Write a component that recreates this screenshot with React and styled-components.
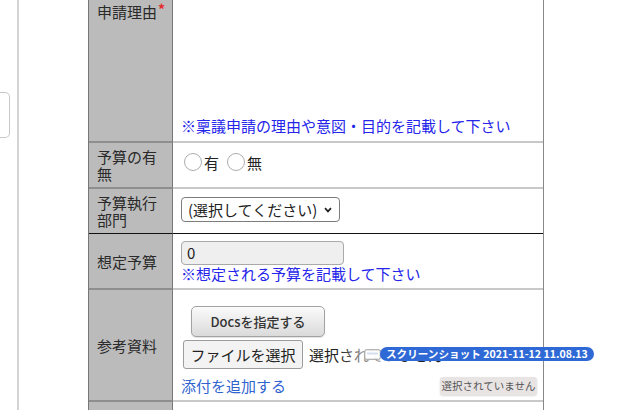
import React from 'react';
import styled, { createGlobalStyle } from 'styled-components';

const GlobalStyle = createGlobalStyle`
  html, body {
    margin: 0;
    padding: 0;
    background: #fff;
    overflow: hidden;
  }
  body {
    font-family: "Noto Sans CJK JP", "Noto Sans", sans-serif;
    color: #222;
  }
  * { box-sizing: border-box; }
`;

const Page = styled.div`
  position: relative;
  display: flex;
  width: 639px;
  height: 410px;
  overflow: hidden;
`;

const Sidebar = styled.aside`
  width: 19px;
  flex-shrink: 0;
  border-right: 2px solid #d4d4d4;
  padding-top: 92px;
`;

const SideTab = styled.div`
  width: 10px;
  height: 46px;
  border: 1px solid #c8c8c8;
  border-left: none;
  border-radius: 0 5px 5px 0;
`;

const Main = styled.main`
  padding-left: 69px;
`;

const Form = styled.div`
  width: 456px;
  border-left: 1px solid #777;
  border-right: 1px solid #888;
`;

const lines = {
  gray: { label: '2px solid #8e8e8e', value: '2px solid #c8c8c8' },
  black: { label: '1px solid #111', value: '1px solid #111' },
  none: { label: 'none', value: 'none' },
};

const Row = styled.div`
  display: grid;
  grid-template-columns: 84px 1fr;
  height: ${p => p.$height}px;
`;

const Label = styled.div`
  display: flex;
  align-items: ${p => (p.$top ? 'flex-start' : 'center')};
  padding: ${p => (p.$top ? '3px' : '0')} 8px 0 8px;
  background: #bbbbbb;
  border-right: 1px solid #777;
  border-bottom: ${p => lines[p.$line].label};
  font-size: 15px;
  line-height: 17px;
  color: #2a2a2a;
`;

const Required = styled.span`
  color: #e52a2a;
  font-size: 14px;
  font-weight: 700;
  line-height: 12px;
  align-self: flex-start;
  margin: 0 -10px 0 1px;
`;

const Value = styled.div`
  display: flex;
  flex-direction: ${p => (p.$column ? 'column' : 'row')};
  justify-content: ${p => p.$justify || 'flex-start'};
  align-items: ${p => (p.$column ? 'flex-start' : 'center')};
  padding: ${p => p.$pad || '0 8px'};
  border-bottom: ${p => lines[p.$line].value};
  font-size: 15px;
  line-height: 17px;
`;

const Hint = styled.div`
  color: #2424ea;
  font-size: 15px;
  line-height: 17px;
`;

const RadioGroup = styled.label`
  display: flex;
  align-items: center;
  margin-right: 5px;
  margin-top: -6px;
  font-size: 15px;
`;

const Radio = styled.input.attrs({ type: 'radio' })`
  appearance: none;
  width: 18px;
  height: 18px;
  margin: 0 2px 0 3px;
  border: 1.5px solid #adadad;
  border-radius: 50%;
  background: #fff;
`;

const SelectWrap = styled.div`
  position: relative;
  margin-top: -4px;
`;

const Select = styled.select`
  appearance: none;
  width: 159px;
  height: 25px;
  padding: 0 20px 0 6px;
  border: 1px solid #7c7c7c;
  border-radius: 4px;
  background: #fff;
  font-family: inherit;
  font-size: 15px;
  color: #222;
`;

const Chevron = styled.svg`
  position: absolute;
  right: 8px;
  top: 10px;
  pointer-events: none;
`;

const NumberInput = styled.input`
  width: 163px;
  height: 24px;
  padding: 0 5px;
  border: 1px solid #a9a9a9;
  border-radius: 4px;
  background: #efefef;
  font-family: inherit;
  font-size: 15px;
  color: #222;
`;

const DocsButton = styled.button`
  margin-left: 10px;
  width: 134px;
  height: 31px;
  border: 1px solid #a2a2a2;
  border-radius: 5px;
  background: linear-gradient(#fbfbfb, #dadada);
  box-shadow: 0 1px 1px rgba(0, 0, 0, 0.12);
  font-family: inherit;
  font-size: 13px;
  font-weight: 500;
  color: #333;
`;

const FileLine = styled.div`
  display: flex;
  align-items: center;
  gap: 6px;
  margin-top: 3px;
`;

const FileButton = styled.button`
  margin-left: 2px;
  height: 29px;
  width: 120px;
  padding: 0;
  border: 1px solid #9c9c9c;
  border-radius: 3px;
  background: #f3f3f3;
  font-family: inherit;
  font-size: 15px;
  color: #222;
`;

const FileStatus = styled.span`
  font-size: 15px;
  color: #222;
`;

const AddLink = styled.a`
  margin-top: 8px;
  color: #2f63cf;
  font-size: 15px;
  text-decoration: none;
`;

const DragGlow = styled.div`
  position: absolute;
  left: 340px;
  top: 328px;
  width: 70px;
  height: 50px;
  background: radial-gradient(closest-side, rgba(255, 255, 255, 0.85), rgba(255, 255, 255, 0));
`;

const DragIcon = styled.svg`
  position: absolute;
  left: 364px;
  top: 349px;
`;

const DragPill = styled.div`
  position: absolute;
  left: 380px;
  top: 347px;
  height: 14px;
  padding: 0 6px;
  border-radius: 7px;
  background: #2f69d6;
  color: #fff;
  font-size: 10.6px;
  font-weight: 600;
  line-height: 14px;
  white-space: nowrap;
`;

const Tooltip = styled.div`
  position: absolute;
  left: 440px;
  top: 377px;
  width: 97px;
  height: 18px;
  border-radius: 3px;
  background: #e8e4e4;
  box-shadow: 0 1px 2px rgba(0, 0, 0, 0.15);
  color: #555;
  font-size: 10.5px;
  line-height: 18px;
  text-align: center;
`;

export default function App() {
  return (
    <>
      <GlobalStyle />
      <Page>
        <Sidebar>
          <SideTab />
        </Sidebar>
        <Main>
          <Form>
            <Row $height={143}>
              <Label $top $line="gray">
                申請理由<Required>*</Required>
              </Label>
              <Value $column $justify="flex-end" $pad="0 8px 7px" $line="gray">
                <Hint>※稟議申請の理由や意図・目的を記載して下さい</Hint>
              </Value>
            </Row>
            <Row $height={46}>
              <Label $line="gray">予算の有無</Label>
              <Value $line="gray">
                <RadioGroup>
                  <Radio name="budget" />有
                </RadioGroup>
                <RadioGroup>
                  <Radio name="budget" />無
                </RadioGroup>
              </Value>
            </Row>
            <Row $height={45}>
              <Label $line="black">予算執行部門</Label>
              <Value $line="black">
                <SelectWrap>
                  <Select defaultValue="">
                    <option value="">(選択してください)</option>
                  </Select>
                  <Chevron width="8" height="6" viewBox="0 0 8 6">
                    <path d="M1 1.2 L4 4.4 L7 1.2" fill="none" stroke="#222" strokeWidth="1.7" />
                  </Chevron>
                </SelectWrap>
              </Value>
            </Row>
            <Row $height={56}>
              <Label $line="gray">想定予算</Label>
              <Value $column $justify="center" $line="gray">
                <NumberInput defaultValue="0" />
                <Hint>※想定される予算を記載して下さい</Hint>
              </Value>
            </Row>
            <Row $height={112}>
              <Label $line="gray">参考資料</Label>
              <Value $column $pad="16px 8px 0" $line="gray">
                <DocsButton>Docsを指定する</DocsButton>
                <FileLine>
                  <FileButton>ファイルを選択</FileButton>
                  <FileStatus>選択されていません</FileStatus>
                </FileLine>
                <AddLink href="#">添付を追加する</AddLink>
              </Value>
            </Row>
            <Row $height={40}>
              <Label $line="none" />
              <Value $line="none" />
            </Row>
          </Form>
        </Main>
        <DragGlow />
        <DragIcon width="17" height="11" viewBox="0 0 17 11">
          <rect x="0.75" y="0.75" width="15.5" height="9.5" rx="1.5" fill="rgba(255,255,255,0.9)" stroke="#9a9a9a" strokeWidth="1" />
          <rect x="3" y="3.5" width="11" height="2" fill="#d6deee" />
        </DragIcon>
        <DragPill>スクリーンショット 2021-11-12 11.08.13</DragPill>
        <Tooltip>選択されていません</Tooltip>
      </Page>
    </>
  );
}
